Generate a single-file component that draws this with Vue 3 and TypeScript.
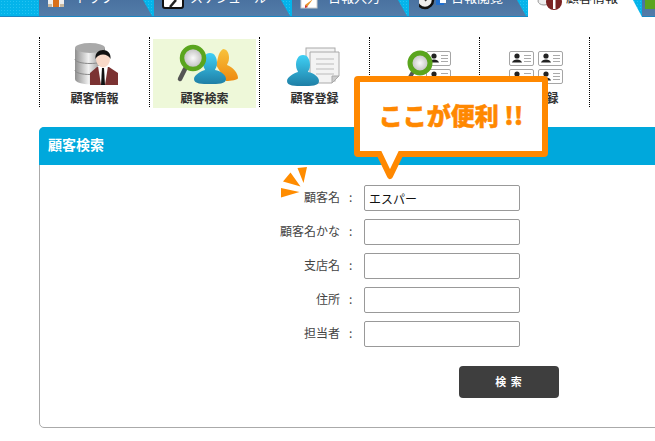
<script setup lang="ts">
type Tab = { id: string, label: string, width: number, pad: number, active?: boolean }
type MenuItem = { id: string, label: string, active?: boolean }

const tabs: Tab[] = [
  { id: 'top', label: 'トップ', width: 113, pad: 4, },
  { id: 'schedule', label: 'スケジュール', width: 136, pad: 4 },
  { id: 'input', label: '日報入力', width: 115, pad: 4 },
  { id: 'view', label: '日報閲覧', width: 117, pad: 10 },
  { id: 'customer', label: '顧客情報', width: 114, pad: 6, active: true },
]
const menu: MenuItem[] = [
  { id: 'info', label: '顧客情報' },
  { id: 'search', label: '顧客検索', active: true },
  { id: 'add', label: '顧客登録' },
  { id: 'card', label: '名刺検索' },
  { id: 'cardAdd', label: '名刺登録' },
]
const fields = [
  { label: '顧客名', value: 'エスパー' },
  { label: '顧客名かな', value: '' },
  { label: '支店名', value: '' },
  { label: '住所', value: '' },
  { label: '担当者', value: '' },
]
const cardRows = [11, 29]
const personPath = 'M39 13 C44 13 46 18 46 23 C46 27 44 29 44 30 C50 31 55 35 55 39 C55 44 47 44 39 44 C31 44 23 44 23 39 C23 35 30 31 34 30 C34 29 32 27 32 23 C32 18 34 13 39 13 Z'
</script>

<template>
  <div class="page">
    <nav class="tabs">
      <a v-for="tab in tabs" :key="tab.id" class="tab" :class="{ active: tab.active }"
        :style="{ width: tab.width + 'px', paddingLeft: tab.pad + 'px' }">
        <svg class="tab-icon" width="30" height="16" viewBox="0 0 30 16">
          <g v-if="tab.id === 'top'">
            <rect x="5" y="-4" width="16" height="11" fill="#eee" />
            <rect x="5" y="4" width="4" height="3" fill="#c9b9a0" />
            <rect x="17" y="4" width="4" height="3" fill="#c9b9a0" />
            <rect x="10" y="0" width="6" height="7" fill="#d9701a" />
          </g>
          <g v-if="tab.id === 'schedule'">
            <rect x="5" y="-6" width="20" height="14" rx="2" fill="#fff" stroke="#111" stroke-width="2" />
            <path d="M18 0 L12 7" stroke="#222" stroke-width="2.5" />
          </g>
          <g v-if="tab.id === 'input'">
            <rect x="5" y="-4" width="16" height="12" fill="#fff" stroke="#ccc" />
            <path d="M17 -1 L11 7 L9 5 Z" fill="#e8952a" />
            <path d="M12 7 L9 8 L9 5 Z" fill="#c33" />
          </g>
          <g v-if="tab.id === 'view'">
            <circle cx="6" cy="0" r="8" fill="#eee" stroke="#111" stroke-width="2.5" />
            <path d="M6 1 L11 -4" stroke="#333" stroke-width="1.5" />
            <rect x="17" y="0" width="8" height="5" fill="#1f6fd0" />
            <rect x="21" y="0" width="6" height="3" fill="#fff" />
          </g>
          <g v-if="tab.id === 'customer'">
            <ellipse cx="10" cy="1" rx="6" ry="4" fill="#eee" stroke="#999" />
            <circle cx="20" cy="2" r="8" fill="#7a2222" />
            <rect x="19" y="-2" width="2.5" height="11" fill="#fff" />
          </g>
        </svg>
        <span class="tab-label">{{ tab.label }}</span>
      </a>
      <a class="tab tab-next"><span class="tab-green"></span></a>
    </nav>

    <ul class="menu">
      <li v-for="item in menu" :key="item.id" class="menu-item">
        <div class="menu-inner" :class="{ active: item.active }">
          <svg width="68" height="48" viewBox="0 0 68 48">
            <defs>
              <linearGradient :id="'db-' + item.id" x1="0" x2="1" y1="0" y2="0">
                <stop offset="0" stop-color="#8f8f8f" />
                <stop offset=".45" stop-color="#f0f0f0" />
                <stop offset="1" stop-color="#777" />
              </linearGradient>
              <linearGradient :id="'blue-' + item.id" x1="0" x2="0" y1="0" y2="1">
                <stop offset="0" stop-color="#3fd0f5" />
                <stop offset="1" stop-color="#1f7fa6" />
              </linearGradient>
              <linearGradient :id="'orange-' + item.id" x1="0" x2="0" y1="0" y2="1">
                <stop offset="0" stop-color="#f8c23c" />
                <stop offset="1" stop-color="#ee8a10" />
              </linearGradient>
              <radialGradient :id="'lens-' + item.id">
                <stop offset="0" stop-color="#fafafa" />
                <stop offset="1" stop-color="#b8b8b8" />
              </radialGradient>
            </defs>

            <g v-if="item.id === 'info'">
              <path d="M14 8 V39 C14 46 44 46 44 39 V8 Z" :fill="'url(#db-' + item.id + ')'" />
              <ellipse cx="29" cy="8" rx="15" ry="5" fill="#a9a9a9" />
              <path d="M14 19 C14 25 44 25 44 19 M14 30 C14 36 44 36 44 30" fill="none" stroke="#888" />
              <path d="M29 33 L36 27 L48 27 L57 33 V45 H29 Z" fill="#7b3232" />
              <path d="M37 26 H47 L44 45 H40 Z" fill="#fff" />
              <path d="M41 28 H43 L44 45 H40 Z" fill="#111" />
              <ellipse cx="42" cy="19" rx="7" ry="8.5" fill="#f9d9c8" />
              <path d="M34.5 19 C33 7 51 7 49.5 19 C47 13 37 13 34.5 19 Z" fill="#111" />
            </g>

            <g v-if="item.id === 'search'">
              <path d="M52 9 C56 9 58 13 58 18 C58 22 56 24 56 25 C62 27 67 33 67 38 C67 40 60 41 55 41 L45 25 C47 22 46 13 52 9 Z"
                :fill="'url(#orange-' + item.id + ')'" />
              <path :d="personPath" :fill="'url(#blue-' + item.id + ')'" />
              <path d="M14 29 L9 39" stroke="#555" stroke-width="4.5" stroke-linecap="round" />
              <circle cx="22" cy="18" r="11" :fill="'url(#lens-' + item.id + ')'" stroke="#5aa51e" stroke-width="4.5" />
            </g>

            <g v-if="item.id === 'add'">
              <rect x="25" y="8" width="29" height="33" fill="#f3f3f3" stroke="#aaa" />
              <path d="M29 12 H58 V36 L51 43 H29 Z" fill="#f3f3f3" stroke="#aaa" />
              <path d="M51 43 V36 H58 Z" fill="#ccc" stroke="#aaa" />
              <path d="M35 19 H53 M35 24 H53 M35 29 H53 M35 34 H53" stroke="#bbb" />
              <path :d="personPath" transform="translate(-17 2)" :fill="'url(#blue-' + item.id + ')'" />
            </g>

            <g v-if="item.id === 'card' || item.id === 'cardAdd'">
              <g v-for="y in cardRows" :key="y">
                <g v-for="x in item.id === 'card' ? [35] : [8, 37]" :key="x" :transform="`translate(${x} ${y})`">
                  <rect x=".5" y=".5" width="24" height="14" rx="1.5" fill="#fff" stroke="#a5a5a5" />
                  <circle cx="8" cy="5" r="2.6" fill="#222" />
                  <path d="M3 11.5 C4 7.5 12 7.5 13 11.5 Z" fill="#222" />
                  <path d="M15 4.5 H22 M15 7.5 H22 M15 10.5 H22" stroke="#aaa" />
                </g>
              </g>
              <g v-if="item.id === 'card'">
                <path d="M22 32 L16 42" stroke="#555" stroke-width="4" />
                <circle cx="29" cy="23" r="10" :fill="'url(#lens-' + item.id + ')'" stroke="#5aa51e" stroke-width="5" />
              </g>
            </g>
          </svg>
          <span class="menu-label">{{ item.label }}</span>
        </div>
      </li>
    </ul>

    <section class="panel">
      <h2 class="panel-title">顧客検索</h2>
      <form class="search-form" @submit.prevent>
        <div v-for="field in fields" :key="field.label" class="row">
          <label class="row-label">{{ field.label }}</label>
          <span class="row-colon">:</span>
          <input class="row-input" type="text" :value="field.value" />
        </div>
        <button class="search-btn" type="submit">検 索</button>
      </form>
    </section>

    <!-- 吹き出し -->
    <svg class="burst" width="28" height="32" viewBox="0 0 28 32">
      <path d="M26 0 L16.5 1 L22.5 16 Z M9.5 5.5 L2 14.5 L19.5 19.5 Z M0 21 V30.5 L18.5 25 Z" fill="#ff8c00" />
    </svg>
    <div class="callout">
      ここが便利 !!
      <svg class="callout-tail" width="32" height="30" viewBox="0 0 32 30">
        <path d="M4 0 L16 25 L28 0" fill="#fff" stroke="#ff8800" stroke-width="6" stroke-linejoin="round" />
      </svg>
    </div>
  </div>
</template>

<style scoped>
.page {
  position: relative;
  width: 655px;
  height: 441px;
  overflow: hidden;
  background: #fff;
  font-family: "Noto Sans CJK JP", "Liberation Sans", sans-serif;
}

.tabs {
  display: flex;
  height: 17px;
  padding-left: 39px;
  box-sizing: border-box;
  border-bottom: 1px solid #1c86c2;
  background-color: #04b4ea;
  background-image: radial-gradient(#25c3f2 1px, transparent 1px);
  background-size: 3px 3px;
  overflow: visible;
}

.tab {
  flex: none;
  display: flex;
  box-sizing: border-box;
  height: 16px;
  background: linear-gradient(#4a72a0, #537ca8);
  color: #fff;
  font-size: 13px;
  clip-path: polygon(0 0, calc(100% - 9px) 0, 100% 100%, 0 100%);
  margin-right: 2px;
  overflow: hidden;
}

.tab.active {
  height: 17px;
  background: #fff;
  color: #222;
  margin-right: 0;
}

.tab-next {
  width: 60px;
  clip-path: none;
  padding-left: 3px;
}

.tab-green {
  width: 12px;
  height: 9px;
  background: #5aa51e;
}

.tab-icon {
  flex: none;
  margin-right: 2px;
}

.tab-label {
  margin-top: -13px;
  line-height: 20px;
  white-space: nowrap;
}

.menu {
  display: flex;
  width: 550px;
  margin: 20px 0 0 39px;
  padding: 0;
  list-style: none;
  border-right: 1px dotted #000;
}

.menu-item {
  width: 110px;
  height: 70px;
  box-sizing: border-box;
  border-left: 1px dotted #000;
}

.menu-inner {
  display: flex;
  flex-direction: column;
  align-items: center;
  height: 69px;
  margin: 2px 3px 0;
  padding-top: 1px;
  box-sizing: border-box;
}

.menu-inner.active {
  background: #eef8d9;
}

.menu-label {
  margin-top: 2px;
  font-size: 12px;
  line-height: 16px;
  font-weight: 700;
  color: #333;
}

.panel {
  width: 640px;
  height: 301px;
  margin: 20px 0 0 39px;
  box-sizing: border-box;
  border: 1px solid #aaa;
  border-radius: 5px;
}

.panel-title {
  height: 38px;
  margin: -1px -1px 0;
  padding-left: 9px;
  background: #00a8dc;
  border-radius: 5px 5px 0 0;
  color: #fff;
  font-size: 14px;
  font-weight: 700;
  line-height: 34px;
}

.search-form {
  display: flex;
  flex-direction: column;
  gap: 8px;
  padding: 20px 0 0 200px;
}

.row {
  display: flex;
  align-items: center;
  height: 26px;
}

.row-label {
  width: 100px;
  padding-bottom: 3px;
  text-align: right;
  font-size: 12px;
  color: #444;
}

.row-colon {
  width: 24px;
  padding: 0 0 3px 9px;
  box-sizing: border-box;
  font-size: 12px;
  color: #444;
}

.row-input {
  width: 156px;
  height: 26px;
  box-sizing: border-box;
  padding: 0 4px;
  border: 1px solid #999;
  border-radius: 2px;
  font-family: inherit;
  font-size: 12px;
  color: #111;
}

.search-btn {
  width: 100px;
  height: 32px;
  margin: 11px 0 0 219px;
  padding: 0 0 2px;
  border: none;
  border-radius: 4px;
  background: #3e3e3e;
  color: #fff;
  font-family: inherit;
  font-size: 11px;
  font-weight: 700;
  letter-spacing: 1px;
}

.burst {
  position: absolute;
  left: 281px;
  top: 167px;
}

.callout {
  position: absolute;
  left: 354px;
  top: 76px;
  width: 194px;
  height: 81px;
  box-sizing: border-box;
  border: 6px solid #ff8800;
  border-radius: 4px;
  background: #fff;
  color: #ff8800;
  font-size: 24px;
  font-weight: 900;
  line-height: 66px;
  text-align: center;
  white-space: nowrap;
  -webkit-text-stroke: 0.5px #ff8800;
}

.callout-tail {
  position: absolute;
  left: 14px;
  top: 69px;
}
</style>

<style>
html, body {
  margin: 0;
  overflow: hidden;
}
</style>
